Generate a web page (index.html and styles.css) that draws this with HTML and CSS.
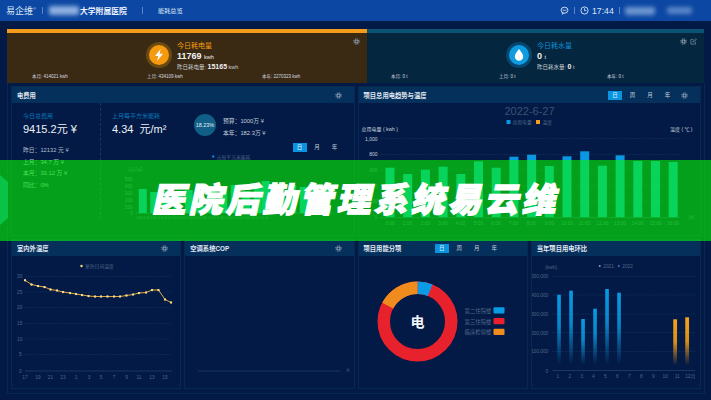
FILE: index.html
```html
<!DOCTYPE html>
<html lang="zh">
<head>
    <meta charset="UTF-8">
    <meta name="viewport" content="width=device-width, initial-scale=1.0">
    <title>医院后勤管理系统易云维</title>
    <link rel="stylesheet" href="styles.css">
</head>
<body>
    <svg class="defs" width="0" height="0">
        <symbol id="gear" viewBox="0 0 12 12">
            <circle cx="6" cy="6" r="2.6" fill="none" stroke="currentColor" stroke-width="2"/>
            <circle cx="6" cy="6" r="4.6" fill="none" stroke="currentColor" stroke-width="1.8" stroke-dasharray="1.8 1.81"/>
        </symbol>
        <marker id="dot" markerUnits="userSpaceOnUse" markerWidth="3" markerHeight="3" refX="1.5" refY="1.5">
            <circle cx="1.5" cy="1.5" r="1.2" fill="#ffdc80"/>
        </marker>
        <linearGradient id="fadeBlue" x1="0" y1="0" x2="0" y2="1">
            <stop offset="0" stop-color="#0a9be6"/>
            <stop offset=".45" stop-color="#0a86c8"/>
            <stop offset="1" stop-color="#0a86c8" stop-opacity="0"/>
        </linearGradient>
        <linearGradient id="fadeOrange" x1="0" y1="0" x2="0" y2="1">
            <stop offset="0" stop-color="#f5a31c"/>
            <stop offset=".5" stop-color="#d98e18"/>
            <stop offset="1" stop-color="#d98e18" stop-opacity="0"/>
        </linearGradient>
    </svg>

    <!-- 顶部导航 -->
    <header class="topbar">
        <span class="logo">易企维<sup>®</sup></span>
        <span class="sep sep-logo"></span>
        <span class="smudge smudge-name"></span>
        <span class="hospital">大学附属医院</span>
        <span class="sep sep-nav"></span>
        <span class="nav-link">能耗总览</span>
        <div class="topbar-right">
            <svg class="top-icon" viewBox="0 0 12 12">
                <ellipse cx="6" cy="5.6" rx="4.6" ry="4" fill="none" stroke="currentColor" stroke-width="1.2"/>
                <path d="M3.4 5.6h5.2M3.6 9l-.8 2 2.4-1.2" fill="none" stroke="currentColor" stroke-width="1"/>
            </svg>
            <span class="sep sep-chat"></span>
            <svg class="top-icon" viewBox="0 0 12 12">
                <circle cx="6" cy="6" r="4.8" fill="none" stroke="currentColor" stroke-width="1.2"/>
                <path d="M6 3v3.2h2.6" fill="none" stroke="currentColor" stroke-width="1.1"/>
            </svg>
            <span class="clock">17:44</span>
            <span class="sep sep-clock"></span>
            <span class="smudge smudge-user"></span>
            <span class="smudge smudge-role"></span>
        </div>
    </header>

    <!-- 今日耗电 / 耗水 -->
    <section class="summary">
        <div class="usage usage-power">
            <div class="usage-main">
                <div class="badge badge-power">
                    <svg viewBox="0 0 12 12"><path d="M7.4.8 2.6 6.9h2.8L4.3 11.2 9.4 4.9H6.5z" fill="#fff"/></svg>
                </div>
                <div class="usage-text">
                    <div class="usage-name">今日耗电量</div>
                    <div class="usage-today">11769 <small>kwh</small></div>
                    <div class="usage-prev"><span>昨日耗电量:</span> <b>15165</b> <small>kwh</small></div>
                </div>
            </div>
            <div class="usage-foot">
                <span>本月: 414021 kwh</span>
                <span>上月: 434109 kwh</span>
                <span>本年: 2270323 kwh</span>
            </div>
            <div class="usage-tools">
                <svg class="gear"><use href="#gear"/></svg>
            </div>
        </div>
        <div class="usage usage-water">
            <div class="usage-main">
                <div class="badge badge-water">
                    <svg viewBox="0 0 12 12"><path d="M6 .9C4.6 3 2.4 5 2.4 7.4a3.6 3.6 0 0 0 7.2 0C9.6 5 7.4 3 6 .9z" fill="#fff"/></svg>
                </div>
                <div class="usage-text">
                    <div class="usage-name">今日耗水量</div>
                    <div class="usage-today">0 <small>t</small></div>
                    <div class="usage-prev"><span>昨日耗水量:</span> <b>0</b> <small>t</small></div>
                </div>
            </div>
            <div class="usage-foot">
                <span>本月: 0 t</span>
                <span>上月: 0 t</span>
                <span>本年: 0 t</span>
            </div>
            <div class="usage-tools">
                <svg class="gear"><use href="#gear"/></svg>
                <svg class="gear" viewBox="0 0 12 12">
                    <path d="M9.5 6.8v3.7h-8v-8h4M5 7.2l.3-1.7L9.6 1.2l1.3 1.3-4.3 4.4z" fill="none" stroke="currentColor" stroke-width="1.1"/>
                </svg>
            </div>
        </div>
    </section>

    <main class="board">
        <!-- 电费用 -->
        <section class="panel panel-wide">
            <div class="panel-head">
                <h3>电费用</h3>
                <svg class="gear"><use href="#gear"/></svg>
            </div>
            <div class="cost">
                <div class="cost-left">
                    <div class="cost-label">今日总费用</div>
                    <div class="cost-value">9415.2元 ¥</div>
                    <ul class="cost-list">
                        <li>昨日：12132 元 ¥</li>
                        <li>上月：34.7 万 ¥</li>
                        <li>本月：33.12 万 ¥</li>
                        <li>同比：0%</li>
                    </ul>
                </div>
                <div class="cost-right">
                    <div class="cost-top">
                        <div class="cost-area">
                            <div class="cost-label">上月每平方米能耗</div>
                            <div class="cost-value">4.34 &nbsp;元/m²</div>
                        </div>
                        <div class="ratio">18.23%</div>
                        <div class="budget">
                            <div>预算：1000万 ¥</div>
                            <div>本年：182.3万 ¥</div>
                        </div>
                    </div>
                    <div class="tabs tabs-cost">
                        <span class="tab on">日</span><span class="tab">月</span><span class="tab">年</span>
                    </div>
                    <svg class="chart chart-cost" viewBox="102 154 251 72">
                        <rect class="blue" x="212.500" y="156.500" width="2" height="2"/>
                        <text class="tick" x="217" y="159.500">元每平方米能耗</text>
                        <text class="tick" x="129" y="172">(元/㎡)</text>
                        <g class="tick" text-anchor="end">
                            <text x="133" y="182">500</text><text x="133" y="189">400</text>
                            <text x="133" y="196">300</text><text x="133" y="203">200</text>
                            <text x="133" y="210">100</text><text x="133" y="216">0</text>
                        </g>
                        <g class="blue">
                            <rect x="139" y="190" width="8" height="24"/><rect x="150.500" y="193" width="8" height="21"/>
                            <rect x="162" y="192" width="8" height="22"/><rect x="173.500" y="194" width="8" height="20"/>
                            <rect x="185" y="191" width="8" height="23"/><rect x="196.500" y="188" width="8" height="26"/>
                            <rect x="208" y="192" width="8" height="22"/><rect x="219.500" y="187" width="8" height="27"/>
                            <rect x="231" y="186" width="8" height="28"/><rect x="242.500" y="192" width="8" height="22"/>
                            <rect x="254" y="186" width="8" height="28"/><rect x="262" y="182" width="8" height="32"/>
                            <rect x="277" y="190" width="8" height="24"/><rect x="288.500" y="186" width="8" height="28"/>
                            <rect x="300" y="188" width="8" height="26"/><rect x="311.500" y="188" width="8" height="26"/>
                            <rect x="323" y="189" width="8" height="25"/>
                        </g>
                        <path class="axis" d="M136 214.500H335"/>
                        <text class="tick tiny" x="137" y="219.500">0:00 1:00 2:00 3:00 4:00 5:00 6:00 7:00 8:00 9:00 10:00 11:00 12:00 13:00 14:00 15:00 16:00</text>
                    </svg>
                </div>
            </div>
        </section>

        <!-- 项目总用电趋势与温度 -->
        <section class="panel panel-wide">
            <div class="panel-head">
                <h3>项目总用电趋势与温度</h3>
                <div class="tabs">
                    <span class="tab on">日</span><span class="tab">周</span><span class="tab">月</span><span class="tab">年</span>
                </div>
                <svg class="gear"><use href="#gear"/></svg>
            </div>
            <svg class="chart" viewBox="358.500 103 341.500 132">
                <text class="chart-date" x="529" y="115" text-anchor="middle">2022-6-27</text>
                <rect class="blue" x="506" y="120" width="4" height="4"/>
                <text class="tick" x="512" y="124">总用电量</text>
                <rect x="535.500" y="120" width="4" height="4" fill="#f59c1a"/>
                <text class="tick" x="542" y="124">温度</text>
                <text class="label" x="361" y="131">总用电量 ( kwh )</text>
                <text class="label" x="692" y="131" text-anchor="end">温度 ( ℃ )</text>
                <g class="label" text-anchor="end">
                    <text x="377" y="140.500">1,000</text><text x="377" y="156">800</text>
                </g>
                <g class="tick" text-anchor="end">
                    <text x="377" y="172">600</text><text x="377" y="187.500">400</text>
                    <text x="377" y="203">200</text><text x="377" y="219">0</text>
                </g>
                <g class="grid">
                    <path d="M380 138.500H680M380 154.500H680M380 170H680M380 185.500H680M380 201.500H680"/>
                </g>
                <g class="blue">
                    <rect x="385" y="167.700" width="9" height="49.600"/><rect x="402.700" y="174" width="9" height="43.300"/>
                    <rect x="420.400" y="169.700" width="9" height="47.600"/><rect x="438.100" y="166.700" width="9" height="50.600"/>
                    <rect x="455.800" y="174" width="9" height="43.300"/><rect x="473.500" y="161.300" width="9" height="56"/>
                    <rect x="491.200" y="167.700" width="9" height="49.600"/><rect x="508.900" y="156.700" width="9" height="60.600"/>
                    <rect x="526.600" y="154.700" width="9" height="62.600"/><rect x="544.300" y="166" width="9" height="51.300"/>
                    <rect x="562" y="156.300" width="9" height="61"/><rect x="579.700" y="151.300" width="9" height="66"/>
                    <rect x="597.400" y="165.700" width="9" height="51.600"/><rect x="615.100" y="155.300" width="9" height="62"/>
                    <rect x="632.800" y="161" width="9" height="56.300"/><rect x="650.500" y="161" width="9" height="56.300"/>
                    <rect x="668.200" y="162" width="9" height="55.300"/>
                </g>
                <path class="axis" d="M380 217.500H680"/>
                <g class="tick" text-anchor="middle">
                    <text x="389.500" y="225">0:00</text><text x="407" y="225">1:00</text><text x="425" y="225">2:00</text>
                    <text x="442.500" y="225">3:00</text><text x="460" y="225">4:00</text><text x="478" y="225">5:00</text>
                    <text x="495.500" y="225">6:00</text><text x="513" y="225">7:00</text><text x="531" y="225">8:00</text>
                    <text x="549" y="225">9:00</text><text x="566.500" y="225">10:00</text><text x="584" y="225">11:00</text>
                    <text x="602" y="225">12:00</text><text x="619.500" y="225">13:00</text><text x="637" y="225">14:00</text>
                    <text x="655" y="225">15:00</text><text x="672.500" y="225">16:00</text>
                    <text x="691" y="219">(h)</text>
                </g>
            </svg>
        </section>

        <!-- 室内外温度 -->
        <section class="panel">
            <div class="panel-head">
                <h3>室内外温度</h3>
                <svg class="gear"><use href="#gear"/></svg>
            </div>
            <svg class="chart" viewBox="12 256 168.250 132">
                <circle cx="81.500" cy="266" r="1.200" fill="#ffdc80"/>
                <text class="tick" x="85" y="268">室外日间温度</text>
                <g class="tick">
                    <text x="17" y="278">30</text><text x="17" y="294">25</text><text x="17" y="309">20</text>
                    <text x="17" y="325">15</text><text x="17" y="341">10</text><text x="19" y="356">5</text><text x="19" y="373">0</text>
                </g>
                <path class="grid" d="M25 276.500H172M25 292H172M25 307.500H172M25 323.500H172M25 339H172M25 354.500H172"/>
                <path class="axis" d="M25 371H172"/>
                <polyline class="temp-line" points="25,280.300 31.500,284.500 38,286 44.500,287 50.500,289.500 57,290.500 63,292 70,293 76,294 82,295 88.500,296 95,296.500 101,296.500 107.500,296.500 114,296.500 120,296.500 126.500,295.500 133,294.500 139,293 146,292.500 152,290 158.500,290 165,299.500 171,302.500"/>
                <g class="tick" text-anchor="middle">
                    <text x="25" y="379">17</text><text x="38" y="379">19</text><text x="50.500" y="379">21</text>
                    <text x="63" y="379">23</text><text x="76" y="379">1</text><text x="89" y="379">3</text>
                    <text x="101" y="379">5</text><text x="114" y="379">7</text><text x="126.500" y="379">9</text>
                    <text x="139" y="379">11</text><text x="152" y="379">13</text><text x="165" y="379">15</text>
                </g>
            </svg>
        </section>

        <!-- 空调系统COP -->
        <section class="panel">
            <div class="panel-head">
                <h3>空调系统COP</h3>
                <svg class="gear"><use href="#gear"/></svg>
            </div>
            <svg class="chart" viewBox="185.250 256 168.250 132">
                <path class="axis" d="M198 371H340"/>
                <text class="tick" x="347" y="372">h</text>
            </svg>
        </section>

        <!-- 项目用能分项 -->
        <section class="panel">
            <div class="panel-head">
                <h3>项目用能分项</h3>
                <div class="tabs tabs-energy">
                    <span class="tab on">日</span><span class="tab">周</span><span class="tab">月</span><span class="tab">年</span>
                </div>
            </div>
            <svg class="chart" viewBox="358.500 256 168.250 132">
                <g fill="none" stroke-width="12.500" transform="rotate(-90 417 321.500)">
                    <circle cx="417" cy="321.500" r="33.750" stroke="#e8222c"/>
                    <circle cx="417" cy="321.500" r="33.750" stroke="#0a9be6" pathLength="360" stroke-dasharray="22 338"/>
                    <circle cx="417" cy="321.500" r="33.750" stroke="#f08c1e" pathLength="360" stroke-dasharray="62 298" stroke-dashoffset="62"/>
                </g>
                <text class="donut-mark" x="417" y="326.500" text-anchor="middle">电</text>
                <g class="legend">
                    <text x="464" y="312.500">第二住院楼</text><text x="464" y="323.500">第三住院楼</text><text x="464" y="334">临床检验楼</text>
                </g>
                <rect x="493" y="307.300" width="11" height="6.300" rx="1" fill="#0a9be6"/>
                <rect x="493" y="318" width="11" height="6.300" rx="1" fill="#e8222c"/>
                <rect x="493" y="328.800" width="11" height="6.300" rx="1" fill="#f08c1e"/>
            </svg>
        </section>

        <!-- 当年项目用电环比 -->
        <section class="panel">
            <div class="panel-head">
                <h3>当年项目用电环比</h3>
            </div>
            <svg class="chart" viewBox="531.750 256 168.250 132">
                <text class="tick" x="545" y="269">(kwh)</text>
                <circle cx="599.500" cy="266" r="1" fill="#8ea3bd"/>
                <text class="tick" x="603" y="268">2021</text>
                <circle cx="618.500" cy="266" r="1" fill="#4a7fb0"/>
                <text class="tick" x="622" y="268">2022</text>
                <g class="tick" text-anchor="end">
                    <text x="548" y="278">500,000</text><text x="548" y="297">400,000</text><text x="548" y="316">300,000</text>
                    <text x="548" y="334.500">200,000</text><text x="548" y="353">100,000</text><text x="548" y="372.500">0</text>
                </g>
                <path class="grid" d="M552 276.500H695M552 295H695M552 314H695M552 332.500H695M552 351.500H695"/>
                <path class="axis" d="M552 370.500H695"/>
                <g fill="url(#fadeBlue)">
                    <rect x="557" y="294.700" width="3.600" height="70"/><rect x="569" y="290.700" width="3.600" height="74"/>
                    <rect x="581" y="319" width="3.600" height="46"/><rect x="593" y="308.700" width="3.600" height="56"/>
                    <rect x="605" y="289" width="3.600" height="76"/><rect x="617" y="292.700" width="3.600" height="72"/>
                </g>
                <g fill="url(#fadeOrange)">
                    <rect x="673" y="319.300" width="3.800" height="46"/><rect x="685" y="317.300" width="3.800" height="48"/>
                </g>
                <g class="tick" text-anchor="middle">
                    <text x="557.500" y="378">1</text><text x="569.500" y="378">2</text><text x="581.500" y="378">3</text>
                    <text x="593" y="378">4</text><text x="605" y="378">5</text><text x="617" y="378">6</text>
                    <text x="629" y="378">7</text><text x="641" y="378">8</text><text x="653" y="378">9</text>
                    <text x="665" y="378">10</text><text x="677" y="378">11</text><text x="690" y="378">12月</text>
                </g>
            </svg>
        </section>
    </main>

    <div class="side-handle"></div>

    <!-- 标题横幅 -->
    <div class="banner">
        <div class="banner-title">医院后勤管理系统易云维</div>
    </div>
</body>
</html>
```

FILE: styles.css
```css
* {
    box-sizing: border-box;
}

body {
    margin: 0;
    width: 711px;
    height: 400px;
    overflow: hidden;
    position: relative;
    background: #021a45;
    color: #d8e2ee;
    font-family: "Liberation Sans", "Noto Sans CJK SC", sans-serif;
    font-size: 6px;
}

.defs {
    position: absolute;
}

/* 顶部导航 */
.topbar {
    height: 21px;
    display: flex;
    align-items: center;
    padding-left: 6px;
    background: #0c47a3;
    color: #dbe6f5;
}

.logo {
    width: 30px;
    font-size: 9px;
    white-space: nowrap;
}

.logo sup {
    font-size: 4px;
}

.sep {
    width: 1px;
    height: 7px;
    background: #5c86c8;
}

.sep-logo {
    margin-left: 6px;
}

.smudge {
    display: block;
    border-radius: 2px;
    background: #8fb0e0;
    filter: blur(2px);
}

.smudge-name {
    width: 30px;
    height: 9px;
    margin-left: 6px;
}

.hospital {
    margin-left: 1px;
    width: 47px;
    font-size: 7.8px;
    font-weight: bold;
    color: #f0f4fb;
    white-space: nowrap;
}

.sep-nav {
    margin-left: 15px;
}

.nav-link {
    margin-left: 15px;
    font-size: 6.2px;
}

.topbar-right {
    margin-left: auto;
    display: flex;
    align-items: center;
    padding-right: 19px;
}

.top-icon {
    width: 9px;
    height: 9px;
}

.sep-chat {
    margin: 0 5px;
}

.clock {
    margin-left: 3px;
    width: 24px;
    font-size: 8.7px;
}

.sep-clock {
    margin: 0 5px 0 3px;
}

.smudge-user {
    width: 30px;
    height: 8px;
    opacity: .75;
}

.smudge-role {
    width: 25px;
    height: 7px;
    margin-left: 12px;
    opacity: .6;
}

/* 今日耗电 / 耗水 */
.summary {
    display: flex;
    height: 54px;
    margin: 8px 7px 0;
}

.usage {
    position: relative;
    border-top: 4px solid;
}

.usage-power {
    width: 360px;
    background: #3a2a14;
    border-color: #f59c1a;
}

.usage-water {
    flex: 1;
    min-width: 0;
    background: #04263f;
    border-color: #0c5272;
}

.usage-main {
    display: flex;
    align-items: center;
    height: 38px;
    padding: 6px 0 0 139px;
}

.badge {
    width: 26px;
    height: 26px;
    border-radius: 50%;
    display: flex;
    align-items: center;
    justify-content: center;
    margin-right: 5px;
}

.badge svg {
    width: 20px;
    height: 20px;
    border-radius: 50%;
    padding: 3px;
}

.badge-power {
    background: #6b4a12;
}

.badge-power svg {
    background: #f59a10;
}

.badge-water {
    background: #07466e;
}

.badge-water svg {
    background: #0f9be0;
}

.usage-text {
    margin-top: 2px;
}

.usage-name {
    font-size: 7px;
    line-height: 10px;
    color: #f59a10;
}

.usage-water .usage-name {
    color: #0f8fd8;
}

.usage-today {
    font-size: 9px;
    line-height: 10px;
    font-weight: bold;
    color: #f2f2f2;
}

.usage-today small,
.usage-prev small {
    font-size: 5.5px;
    font-weight: normal;
}

.usage-prev {
    font-size: 5.5px;
    line-height: 10px;
    color: #c8ccd0;
}

.usage-prev b {
    font-size: 7px;
    color: #f2f2f2;
}

.usage-foot {
    display: flex;
    height: 10px;
    align-items: center;
    padding-left: 25px;
    font-size: 4.5px;
    color: #d8dce0;
}

.usage-foot span {
    flex: none;
    width: 115px;
}

.usage-water .usage-foot {
    padding-left: 24px;
}

.usage-water .usage-foot span {
    width: 108px;
}

.usage-tools {
    position: absolute;
    top: 5px;
    right: 7px;
    display: flex;
    gap: 3px;
}

.gear {
    display: block;
    width: 7px;
    height: 7px;
    color: #8c9cb0;
}

/* 面板 */
.board {
    display: grid;
    grid-template-columns: repeat(4, 1fr);
    grid-template-rows: 148px 148px;
    gap: 5px;
    margin: 0 6px 0 7px;
    padding: 4px 4px 5px;
    border: 1px solid #06294f;
    border-top: 0;
}

.panel {
    min-width: 0;
    outline: 1px solid #06294f;
}

.panel-wide {
    grid-column: span 2;
}

.panel-head {
    height: 16px;
    display: flex;
    align-items: center;
    padding: 0 12px 0 5px;
    background: #05305c;
}

.panel-head h3 {
    margin: 0 auto 0 0;
    font-size: 6.3px;
    font-weight: bold;
    color: #e2e9f2;
}

.tabs {
    display: flex;
    margin-right: 3px;
}

.tab {
    width: 14px;
    height: 9px;
    margin-right: 3.500px;
    line-height: 9px;
    text-align: center;
    font-size: 5.500px;
    color: #c2cede;
}

.tab.on {
    background: #0a94e0;
    color: #e8f4ff;
}

.tabs-energy {
    margin-right: 10px;
}

.chart {
    display: block;
    width: 100%;
    height: 132px;
}

/* 电费用 */
.cost {
    display: flex;
    height: 132px;
}

.cost-left {
    width: 89px;
    padding: 9px 0 0 11px;
    border-right: 1px dashed #123a63;
    margin-bottom: 15px;
}

.cost-right {
    flex: 1;
    min-width: 0;
}

.cost-top {
    display: flex;
    height: 40px;
    padding: 9px 0 0 11px;
}

.cost-area {
    width: 82px;
}

.cost-label {
    font-size: 6px;
    line-height: 9px;
    color: #0a76b8;
}

.cost-value {
    margin-top: 2px;
    font-size: 11px;
    line-height: 13px;
    color: #eef2f7;
}

.cost-list {
    list-style: none;
    margin: 9px 0 0;
    padding: 0;
    font-size: 5.800px;
    line-height: 11.500px;
    color: #b4bfce;
}

.ratio {
    width: 22px;
    height: 22px;
    margin: 2px 7px 0 0;
    border-radius: 50%;
    background: #115f86;
    color: #e4eef5;
    font-size: 5.400px;
    line-height: 22px;
    text-align: center;
}

.budget {
    padding-top: 4px;
    font-size: 5.800px;
    line-height: 11.500px;
    color: #c8d2de;
}

.tabs-cost {
    justify-content: flex-end;
    height: 11px;
    margin-right: 12px;
}

.tabs-cost .tab {
    margin: 0 0 0 3.500px;
}

.chart-cost {
    height: 72px;
    margin-top: -1px;
}

/* 图表里的文字 */
.tick text,
text.tick {
    font-size: 4.800px;
    fill: #4f6788;
}

.tiny {
    font-size: 3.200px !important;
}

.label text,
text.label {
    font-size: 5px;
    fill: #c8d2de;
}

.chart-date {
    font-size: 11px;
    fill: #3d5274;
}

.legend text {
    font-size: 5.400px;
    fill: #52688a;
}

.donut-mark {
    font-size: 14px;
    font-weight: bold;
    fill: #f4f6fa;
}

.blue {
    fill: #0a98e2;
}

.grid {
    fill: none;
    stroke: #1a3b66;
    stroke-width: .6;
    stroke-dasharray: 1.500 1.500;
}

.axis {
    fill: none;
    stroke: #24466f;
    stroke-width: .7;
}

.temp-line {
    fill: none;
    stroke: #f5b94a;
    stroke-width: .9;
    marker-start: url(#dot);
    marker-mid: url(#dot);
    marker-end: url(#dot);
}

/* 左侧把手 */
.side-handle {
    position: absolute;
    left: -8px;
    top: 175px;
    width: 16px;
    height: 50px;
    background: #0a70b0;
    clip-path: polygon(0 0, 50% 0, 100% 14%, 100% 86%, 50% 100%, 0 100%);
}

/* 标题横幅 */
.banner {
    position: absolute;
    left: 0;
    top: 160px;
    width: 100%;
    height: 81px;
    display: flex;
    align-items: center;
    justify-content: center;
    background: rgba(6, 250, 0, .6);
}

.banner-title {
    padding-bottom: 5px;
    font-family: "Noto Sans CJK SC", sans-serif;
    font-size: 34px;
    line-height: 44px;
    font-weight: 900;
    letter-spacing: 3px;
    margin-right: -3px;
    color: #fff;
    -webkit-text-stroke: 1.2px #fff;
    transform: skewX(-12deg);
    white-space: nowrap;
}
```
